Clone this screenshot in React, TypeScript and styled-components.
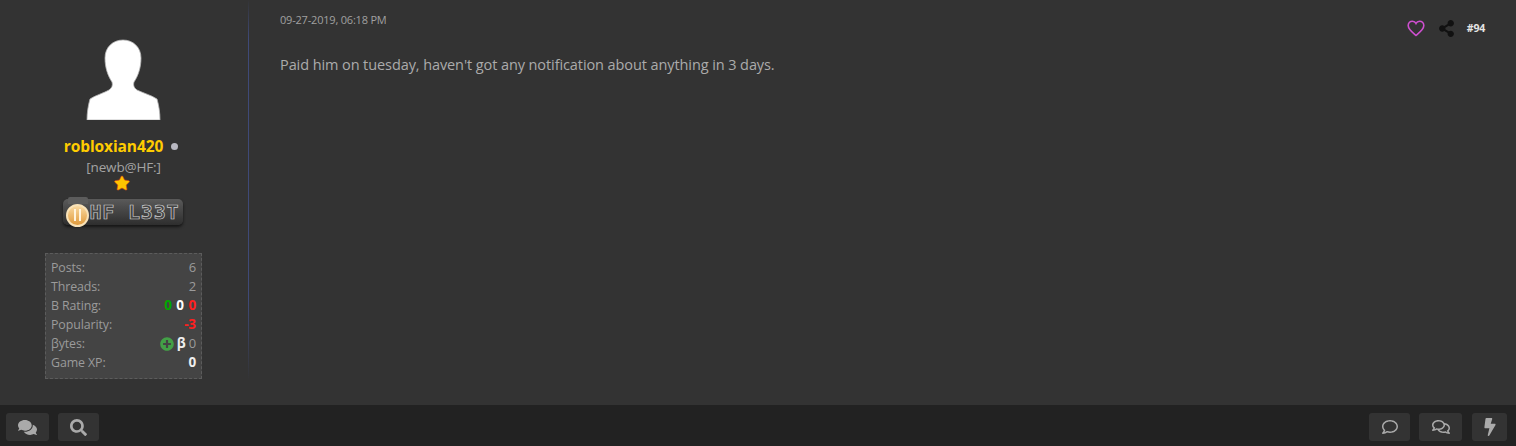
import styled, { createGlobalStyle } from "styled-components";
import { FaComments, FaSearch, FaRegComment, FaRegComments, FaBolt, FaShareAlt, FaPlusCircle, FaStar } from "react-icons/fa";

const GlobalStyle = createGlobalStyle`
  html, body { margin: 0; padding: 0; background: #333333; }
  body { font-family: "Open Sans", "Noto Sans", sans-serif; overflow: hidden; }
`;

const Page = styled.div`
  width: 1516px;
  height: 446px;
  display: flex;
  flex-direction: column;
  background: #333333;
`;

const Post = styled.div`
  height: 405px;
  display: flex;
`;

const Author = styled.div`
  width: 249px;
  height: 380px;
  box-sizing: border-box;
  padding: 37px 0 0 45px;
  border-right: 1px solid;
  border-image: linear-gradient(to bottom, #333333 0, #3f4a78 40px, #3f4a78 300px, #333333 380px) 1;
`;

const AuthorInner = styled.div`
  width: 157px;
  display: flex;
  flex-direction: column;
  align-items: center;
`;

const Avatar = styled.svg`
  display: block;
  width: 76px;
  height: 83px;
  margin-left: -1px;
`;

const NameRow = styled.div`
  display: flex;
  align-items: center;
  margin-top: 16px;
  height: 20px;
  margin-left: -5px;
`;

const Name = styled.span`
  color: #ffcc00;
  font-size: 15.5px;
  font-weight: 700;
  letter-spacing: -0.1px;
`;

const StatusDot = styled.span`
  width: 7px;
  height: 7px;
  margin-left: 8px;
  border-radius: 50%;
  background: #b9b9c2;
`;

const UserTitle = styled.div`
  color: #a3a3a3;
  font-size: 13.5px;
  line-height: 18px;
  margin-top: 2px;
  letter-spacing: -0.15px;
`;

const Star = styled.div`
  height: 16px;
  margin-top: -1px;
  margin-left: -3px;
  color: #ffc400;
  font-size: 16px;
  line-height: 16px;
  & svg {
    display: block;
    stroke: #d9480f;
    stroke-width: 24px;
    overflow: visible;
  }
`;

const Badge = styled.div`
  position: relative;
  width: 120px;
  height: 26px;
  margin-top: 8px;
  margin-left: -2px;
  box-sizing: border-box;
  padding-left: 27px;
  border-radius: 5px;
  background: linear-gradient(to bottom, #5a5a5a 0, #4a4a4a 35%, #2e2e2e 100%);
  box-shadow: 0 2px 3px #151515;
  display: flex;
  align-items: center;
  color: #444444;
  font-family: "DejaVu Sans Mono", monospace;
  font-weight: 700;
  font-size: 20px;
  letter-spacing: 0.8px;
  white-space: nowrap;
  -webkit-text-stroke: 0.7px #cfcfcf;
`;

const Medal = styled.span`
  position: absolute;
  left: 3px;
  top: 5px;
  width: 23px;
  height: 23px;
  box-sizing: border-box;
  border-radius: 50%;
  border: 2px solid #f8e2b8;
  background: linear-gradient(to bottom, #f9d9a0, #e09a3c);
  &::after {
    content: "";
    position: absolute;
    left: 6px;
    top: 3px;
    width: 3px;
    height: 12px;
    border-left: 2px solid #fff3dc;
    border-right: 2px solid #fff3dc;
  }
`;

const Ribbon = styled.span`
  position: absolute;
  left: 5px;
  top: -2px;
  width: 20px;
  height: 7px;
  border-radius: 2px 2px 0 0;
  background: #5c5c5c;
`;

const Stats = styled.div`
  width: 157px;
  box-sizing: border-box;
  height: 126px;
  margin-top: 28px;
  padding: 4px 5px 0 5px;
  background: #444444;
  border: 1px dashed #5c5c5c;
  font-size: 12.4px;
  color: #9b9b9b;
`;

const StatRow = styled.div`
  height: 19px;
  line-height: 19px;
  display: flex;
  justify-content: space-between;
  align-items: center;
  letter-spacing: -0.1px;
`;

const Value = styled.span<{ $color?: string; $bold?: boolean; $gap?: number }>`
  color: ${(p) => p.$color || "#9b9b9b"};
  font-weight: ${(p) => (p.$bold ? 700 : 400)};
  font-size: ${(p) => (p.$bold ? "13.5px" : "13px")};
  margin-left: ${(p) => p.$gap ?? 4.5}px;
`;

const Values = styled.span`
  display: flex;
  align-items: center;
`;

const PlusIcon = styled(FaPlusCircle)`
  color: #43a047;
  font-size: 14px;
`;

const Main = styled.div`
  flex: 1;
  padding: 13px 30px 0 31px;
  display: flex;
  flex-direction: column;
`;

const MetaRow = styled.div`
  display: flex;
  justify-content: space-between;
`;

const PostDate = styled.span`
  color: #a0a0a0;
  font-size: 11px;
  line-height: 14px;
  letter-spacing: -0.2px;
`;

const Actions = styled.div`
  display: flex;
  align-items: center;
  margin-top: 7px;
  height: 16px;
`;

const Heart = styled.svg`
  width: 18px;
  height: 17px;
  fill: none;
  stroke: #cf4fd0;
  stroke-width: 1.6;
`;

const ShareIcon = styled(FaShareAlt)`
  color: #111111;
  font-size: 17px;
  margin-left: 13px;
`;

const PostNumber = styled.span`
  color: #e4e4e4;
  font-size: 10.5px;
  font-weight: 700;
  margin-left: 12px;
  letter-spacing: -0.2px;
  margin-right: 1px;
`;

const Message = styled.div`
  margin-top: 19px;
  color: #ababab;
  font-size: 14.5px;
  line-height: 20px;
  letter-spacing: -0.09px;
`;

const BottomBar = styled.div`
  height: 41px;
  box-sizing: border-box;
  padding: 8px 9px 5px 6px;
  background: #222222;
  display: flex;
  justify-content: space-between;
`;

const ButtonGroup = styled.div<{ $gap: number }>`
  display: flex;
  gap: ${(p) => p.$gap}px;
`;

const BarButton = styled.div<{ $width: number; $icon?: number }>`
  width: ${(p) => p.$width}px;
  height: 28px;
  border-radius: 3px;
  background: #333333;
  color: #aaaaaa;
  font-size: ${(p) => p.$icon || 16}px;
  display: flex;
  align-items: center;
  justify-content: center;
  &:last-child:nth-child(3) {
    margin-left: 1px;
  }
`;

const stats = [
  ["Posts:", "6"],
  ["Threads:", "2"],
];

export default function App() {
  return (
    <Page>
      <GlobalStyle />
      <Post>
        <Author>
          <AuthorInner>
            <Avatar viewBox="0 0 76 83">
              <path
                d="M38 3c-10 0-18 7-18 18 0 10 3 18 7 24 1 3 0 6-3 8-5 3-13 5-19 9C3 69 2 76 2 83h73c0-7-1-14-3-21-6-4-14-6-20-9-3-2-4-5-3-8 4-6 7-14 7-24C56 10 48 3 38 3Z"
                fill="#ffffff"
                stroke="#b5b5b5"
                strokeWidth="0.8"
              />
            </Avatar>
            <NameRow>
              <Name>robloxian420</Name>
              <StatusDot />
            </NameRow>
            <UserTitle>[newb@HF:]</UserTitle>
            <Star>
              <FaStar />
            </Star>
            <Badge>
              <Ribbon />
              <Medal />
              HF L33T
            </Badge>
            <Stats>
              {stats.map(([label, value]) => (
                <StatRow key={label}>
                  <span>{label}</span>
                  <Value>{value}</Value>
                </StatRow>
              ))}
              <StatRow>
                <span>B Rating:</span>
                <Values>
                  <Value $bold $color="#00a800">0</Value>
                  <Value $bold $color="#ffffff">0</Value>
                  <Value $bold $color="#ff2020">0</Value>
                </Values>
              </StatRow>
              <StatRow>
                <span>Popularity:</span>
                <Value $bold $color="#ff2020">-3</Value>
              </StatRow>
              <StatRow>
                <span>βytes:</span>
                <Values>
                  <PlusIcon />
                  <Value $bold $gap={3} $color="#eeeeee">β</Value>
                  <Value $gap={3}>0</Value>
                </Values>
              </StatRow>
              <StatRow>
                <span>Game XP:</span>
                <Value $bold $color="#eeeeee">0</Value>
              </StatRow>
            </Stats>
          </AuthorInner>
        </Author>
        <Main>
          <MetaRow>
            <PostDate>09-27-2019, 06:18 PM</PostDate>
            <Actions>
              <Heart viewBox="0 0 18 17">
                <path d="M9 15.5C6 13 1.2 9.6 1.2 5.6 1.2 3 3.2 1.2 5.4 1.2 7 1.2 8.3 2 9 3.4 9.7 2 11 1.2 12.6 1.2c2.2 0 4.2 1.8 4.2 4.4 0 4-4.8 7.4-7.8 9.9Z" />
              </Heart>
              <ShareIcon />
              <PostNumber>#94</PostNumber>
            </Actions>
          </MetaRow>
          <Message>Paid him on tuesday, haven't got any notification about anything in 3 days.</Message>
        </Main>
      </Post>
      <BottomBar>
        <ButtonGroup $gap={9}>
          <BarButton $width={43} $icon={19}><FaComments /></BarButton>
          <BarButton $width={41} $icon={17}><FaSearch /></BarButton>
        </ButtonGroup>
        <ButtonGroup $gap={9}>
          <BarButton $width={41}><FaRegComment /></BarButton>
          <BarButton $width={43} $icon={18}><FaRegComments /></BarButton>
          <BarButton $width={35} $icon={18}><FaBolt /></BarButton>
        </ButtonGroup>
      </BottomBar>
    </Page>
  );
}
